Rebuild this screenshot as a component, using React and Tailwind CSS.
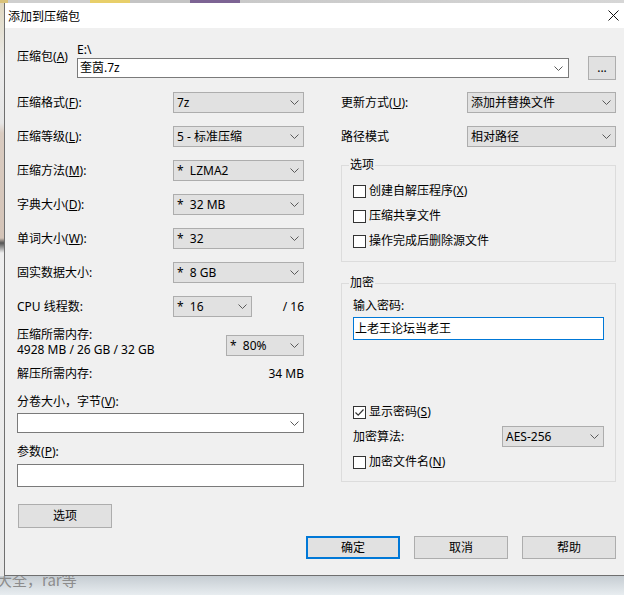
import React from "react";

const Chevron = () => (
  <svg width="9" height="5" viewBox="0 0 9 5" className="shrink-0">
    <polyline points="0.5,0.5 4.5,4.5 8.5,0.5" fill="none" stroke="#5a5a5a" strokeWidth="1" />
  </svg>
);

const Sel = ({ text, className = "" }) => (
  <div className={"h-[21px] border border-[#adadad] bg-[#e1e1e1] flex items-center justify-between pl-[3px] pr-[4px] " + className}>
    <span className="whitespace-pre leading-[14px]">{text}</span>
    <Chevron />
  </div>
);

const Acc = ({ t, k, tail = ":" }) => (
  <>
    {t}(<span className="underline underline-offset-[1px]">{k}</span>){tail}
  </>
);

const Check = ({ checked = false, children }) => (
  <div className="flex items-center h-[16px]">
    <div className="w-[13px] h-[13px] border border-[#333] bg-white flex items-center justify-center shrink-0">
      {checked && (
        <svg width="11" height="11" viewBox="0 0 11 11">
          <polyline points="1.5,5.5 4.2,8.2 9.5,2.5" fill="none" stroke="#333" strokeWidth="1.2" />
        </svg>
      )}
    </div>
    <span className="ml-[3px] leading-[16px]">{children}</span>
  </div>
);

const Btn = ({ children, primary = false, className = "" }) => (
  <div
    className={
      "w-[94px] h-[23px] flex items-center justify-center bg-[#e1e1e1] " +
      (primary ? "border-2 border-[#0078d7] " : "border border-[#adadad] ") +
      className
    }
  >
    {children}
  </div>
);

const Row = ({ label, children }) => (
  <div className="flex items-center h-[21px]">
    <div className="w-[156px] shrink-0">{label}</div>
    {children}
  </div>
);

export default function App() {
  return (
    <div className="w-[624px] h-[595px] overflow-hidden bg-[#e4e8eb] text-[12px] text-black font-['Noto_Sans','Noto_Sans_CJK_SC',sans-serif]">
      <div className="h-[3px] bg-[linear-gradient(90deg,#d9c27a_0px,#d9c27a_8px,#cfcfcf_8px,#cfcfcf_90px,#e8cf6a_90px,#e8cf6a_130px,#c4c4c4_130px,#c4c4c4_190px,#7d6494_190px,#7d6494_240px,#c9c9c9_240px,#d6d6d6_100%)]" />
      <div className="flex">
        <div className="w-[4px] h-[573px] shrink-0 bg-[linear-gradient(180deg,#e0d8c0_0px,#ececec_60px,#e6e6e6_120px,#d9cbc0_130px,#d4c4b8_235px,#555_240px,#efefef_250px,#e8e8e8_100%)]" />
        <div className="w-[625px] h-[573px] shrink-0 flex flex-col border-l border-b border-[#6f6f6f] bg-[#f0f0f0]">
          {/* title bar */}
          <div className="h-[25px] bg-white flex items-center justify-between pl-[3px] pr-[10px] shrink-0">
            <span className="font-['Noto_Sans_CJK_SC',sans-serif]">添加到压缩包</span>
            <svg width="11" height="11" viewBox="0 0 11 11">
              <path d="M0.5 0.5 L10.5 10.5 M10.5 0.5 L0.5 10.5" stroke="#111" strokeWidth="1" fill="none" />
            </svg>
          </div>

          {/* body */}
          <div className="flex-1 pl-[12px] pr-[13px] pt-[14px] flex flex-col">
            {/* archive row */}
            <div className="flex items-start h-[38px]">
              <div className="w-[60px] pt-[7px] leading-[15px] shrink-0">
                <Acc t="压缩包" k="A" tail="" />
              </div>
              <div className="w-[492px] shrink-0">
                <div className="h-[16px] leading-[16px]">E:\</div>
                <div className="h-[20px] bg-white border border-[#7a7a7a] flex items-center justify-between pl-[2px] pr-[5px]">
                  <span className="leading-[14px]">奎茵.7z</span>
                  <Chevron />
                </div>
              </div>
              <div className="ml-[19px] mt-[14px] w-[28px] h-[24px] border border-[#adadad] bg-[#e1e1e1] flex items-center justify-center shrink-0 leading-[12px]">
                ...
              </div>
            </div>

            {/* columns */}
            <div className="flex gap-[37px] mt-[12px]">
              {/* left */}
              <div className="w-[287px] shrink-0 flex flex-col">
                <Row label={<Acc t="压缩格式" k="F" />}>
                  <Sel text="7z" className="w-[131px]" />
                </Row>
                <div className="mt-[13px]">
                  <Row label={<Acc t="压缩等级" k="L" />}>
                    <Sel text="5 - 标准压缩" className="w-[131px]" />
                  </Row>
                </div>
                <div className="mt-[13px]">
                  <Row label={<Acc t="压缩方法" k="M" />}>
                    <Sel text="*  LZMA2" className="w-[131px]" />
                  </Row>
                </div>
                <div className="mt-[13px]">
                  <Row label={<Acc t="字典大小" k="D" />}>
                    <Sel text="*  32 MB" className="w-[131px]" />
                  </Row>
                </div>
                <div className="mt-[13px]">
                  <Row label={<Acc t="单词大小" k="W" />}>
                    <Sel text="*  32" className="w-[131px]" />
                  </Row>
                </div>
                <div className="mt-[13px]">
                  <Row label="固实数据大小:">
                    <Sel text="*  8 GB" className="w-[131px]" />
                  </Row>
                </div>
                <div className="mt-[13px]">
                  <Row label="CPU 线程数:">
                    <Sel text="*  16" className="w-[79px]" />
                    <div className="flex-1 text-right">/ 16</div>
                  </Row>
                </div>

                <div className="mt-[11px] flex justify-between items-start">
                  <div className="flex flex-col">
                    <div className="h-[14px] leading-[14px]">压缩所需内存:</div>
                    <div className="h-[15px] leading-[15px]">4928 MB / 26 GB / 32 GB</div>
                  </div>
                  <Sel text="*  80%" className="w-[78px] mt-[7px]" />
                </div>

                <div className="mt-[10px] flex justify-between leading-[14px]">
                  <span>解压所需内存:</span>
                  <span>34 MB</span>
                </div>

                <div className="mt-[14px] leading-[14px]">
                  <Acc t="分卷大小，字节" k="V" />
                </div>
                <div className="mt-[4px] h-[20px] bg-white border border-[#7a7a7a] flex items-center justify-end pr-[4px]">
                  <Chevron />
                </div>

                <div className="mt-[12px] leading-[14px]">
                  <Acc t="参数" k="P" />
                </div>
                <div className="mt-[5px] h-[23px] bg-white border border-[#7a7a7a]" />

                <Btn className="mt-[17px] ml-[1px] h-[24px]">选项</Btn>
              </div>

              {/* right */}
              <div className="w-[275px] shrink-0 flex flex-col">
                <div className="flex items-center h-[21px]">
                  <div className="w-[126px] shrink-0">
                    <Acc t="更新方式" k="U" />
                  </div>
                  <Sel text="添加并替换文件" className="w-[149px]" />
                </div>
                <div className="flex items-center h-[21px] mt-[13px]">
                  <div className="w-[126px] shrink-0">路径模式</div>
                  <Sel text="相对路径" className="w-[149px]" />
                </div>

                <fieldset className="mt-[10px] border border-[#dcdcdc]">
                  <legend className="ml-[7px] px-[1px] leading-[16px]">选项</legend>
                  <div className="px-[11px] pb-[12px] pt-[10px] flex flex-col gap-[9px]">
                    <Check>
                      创建自解压程序(<span className="underline underline-offset-[1px]">X</span>)
                    </Check>
                    <Check>压缩共享文件</Check>
                    <Check>操作完成后删除源文件</Check>
                  </div>
                </fieldset>

                <fieldset className="mt-[13px] border border-[#dcdcdc]">
                  <legend className="ml-[7px] px-[1px] leading-[16px]">加密</legend>
                  <div className="px-[11px] pb-[11px] flex flex-col">
                    <div className="mt-[7px] leading-[15px]">输入密码:</div>
                    <div className="mt-[4px] h-[23px] bg-white border border-[#0078d7] flex items-center pl-[1px]">
                      <span className="leading-[16px]">上老王论坛当老王</span>
                    </div>
                    <div className="mt-[64px]">
                      <Check checked>
                        显示密码(<span className="underline underline-offset-[1px]">S</span>)
                      </Check>
                    </div>
                    <div className="mt-[6px] h-[21px] flex items-center justify-between">
                      <span>加密算法:</span>
                      <Sel text="AES-256" className="w-[102px]" />
                    </div>
                    <div className="mt-[7px]">
                      <Check>
                        加密文件名(<span className="underline underline-offset-[1px]">N</span>)
                      </Check>
                    </div>
                  </div>
                </fieldset>
              </div>
            </div>

            {/* buttons */}
            <div className="mt-[8px] flex justify-end gap-[14px]">
              <Btn primary>确定</Btn>
              <Btn>取消</Btn>
              <Btn>帮助</Btn>
            </div>
          </div>
        </div>
      </div>
      <div className="h-[19px] overflow-hidden bg-gradient-to-b from-[#c6cdd3] to-[#e8edf0]">
        <div className="-mt-[5px] -ml-[3px] text-[15px] leading-[18px] text-[#8c8c8c] font-['Noto_Sans_CJK_SC',sans-serif]">大全，rar等</div>
      </div>
    </div>
  );
}
